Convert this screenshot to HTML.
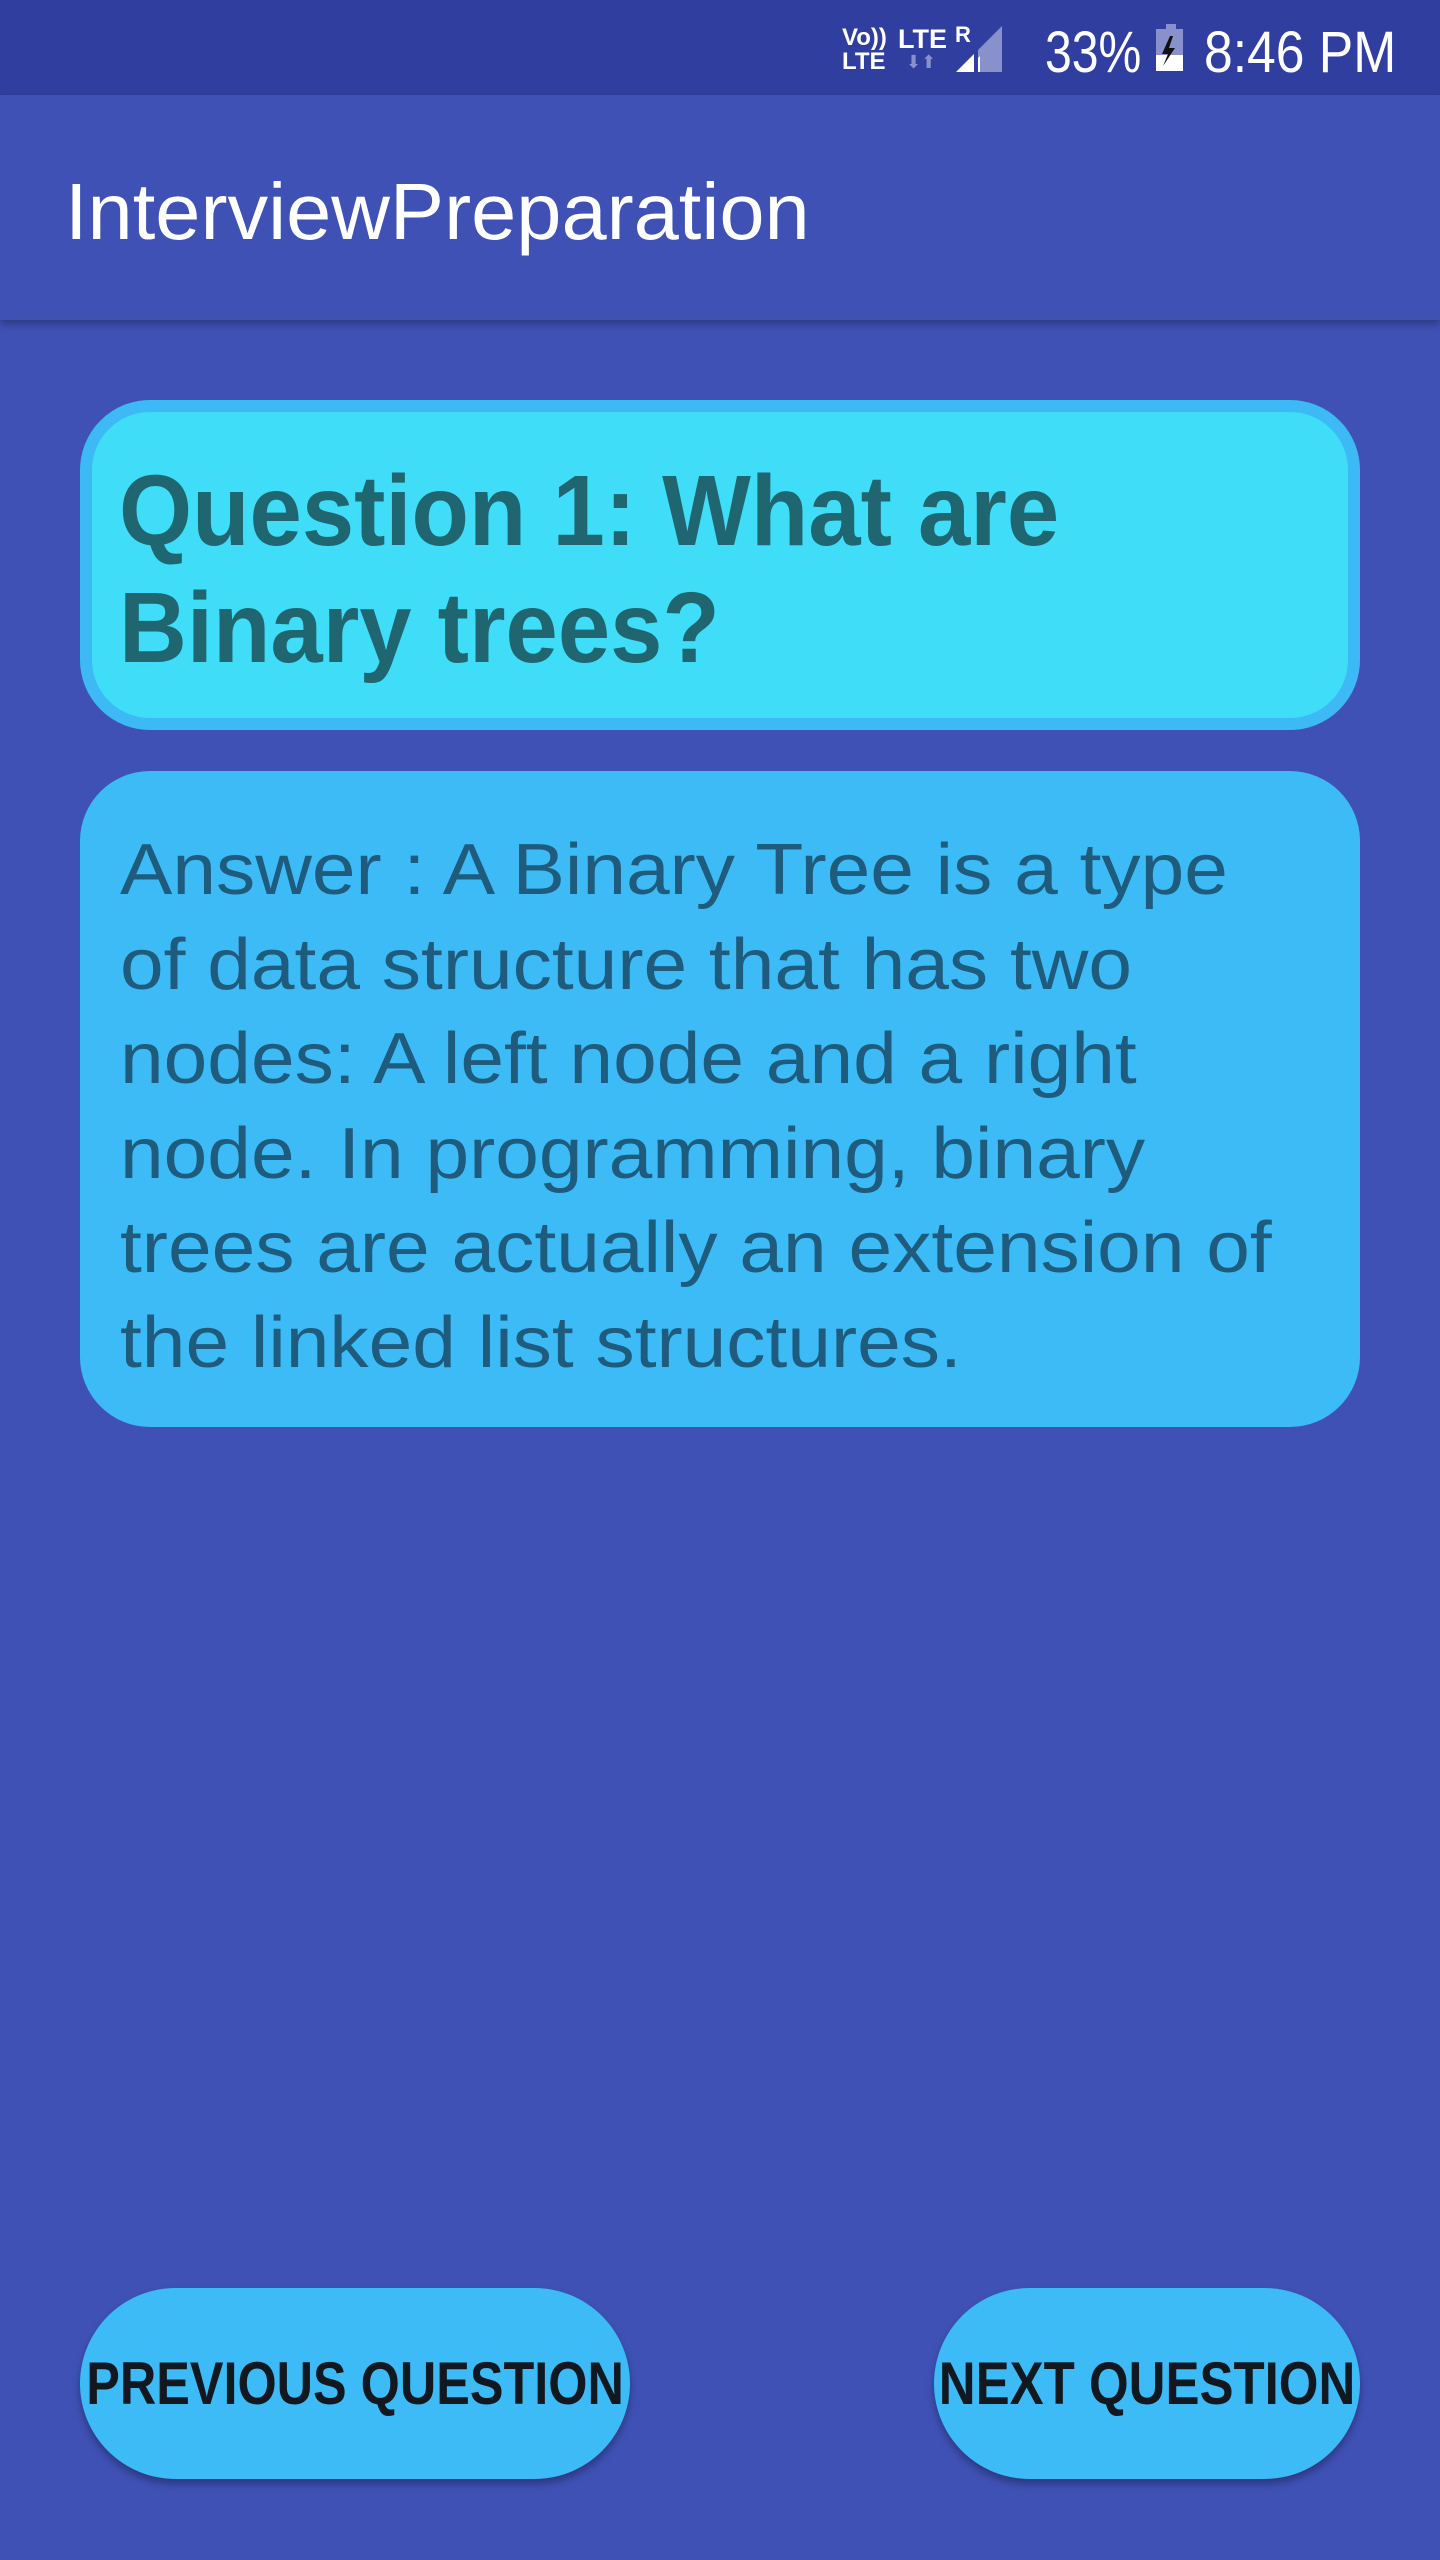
<!DOCTYPE html>
<html><head><meta charset="utf-8"><style>
*{margin:0;padding:0;box-sizing:border-box}
body{width:1440px;height:2560px;background:#3F51B5;position:relative;overflow:hidden;font-family:"Liberation Sans",sans-serif}
.sb{position:absolute;left:0;top:0;width:1440px;height:95px;background:#303F9F}
.ab{position:absolute;left:0;top:95px;width:1440px;height:225px;background:#3F51B5;box-shadow:0 4px 8px rgba(0,0,0,.3)}
.ln{position:absolute;white-space:nowrap;transform-origin:0 0}
.q{position:absolute;left:80px;top:400px;width:1280px;height:330px;background:#3FDDF8;border:12px solid #3DBAF6;border-radius:70px}
.a{position:absolute;left:80px;top:771px;width:1280px;height:656px;background:#3DBBF7;border-radius:70px}
.btn{position:absolute;top:2288px;height:191px;background:#3DBBF7;border-radius:96px;box-shadow:0 5px 8px rgba(0,0,0,.3);display:flex;align-items:center;justify-content:center;font-weight:bold;font-size:60px;color:#121820;white-space:nowrap}
</style></head><body>
<div class="sb">
 <div class="ln" style="left:842px;top:26px;font-size:24px;font-weight:bold;color:#fff;line-height:24px">Vo))<br>LTE</div>
 <div class="ln" style="left:898px;top:24px;font-size:27px;font-weight:bold;color:#fff">LTE</div>
 <div class="ln" style="left:906px;top:52px;font-size:18px;color:#8891CC">⬇⬆</div>
 <div class="ln" style="left:955px;top:22px;font-size:22px;font-weight:bold;color:#fff">R</div>
 <svg style="position:absolute;left:950px;top:22px" width="76" height="52"><polygon points="6,50 24,32 24,50" fill="#fff"/><polygon points="28,50 28,28 52,4 52,50" fill="#8891CC"/><polygon points="28,50 28,36 30,34 30,50" fill="#fff"/></svg>
 <div class="ln" style="left:1045px;top:19px;font-size:58px;color:#fff;transform:scaleX(.83)">33%</div>
 <svg style="position:absolute;left:1153px;top:22px" width="32" height="52"><rect x="13" y="2" width="10" height="6" fill="#8891CC"/><rect x="3" y="7" width="27" height="26" fill="#8891CC"/><rect x="3" y="33" width="27" height="16" fill="#fff"/><polygon points="17,14 9,32 15,32 10,44 22,26 16,26 20,14" fill="#111"/></svg>
 <div class="ln" style="left:1204px;top:19px;font-size:58px;color:#fff;transform:scaleX(.89)">8:46 PM</div>
</div>
<div class="ab"></div>
<div class="ln" style="left:65px;top:172px;font-size:80px;line-height:80px;color:#fff;transform:scaleX(1.015)">InterviewPreparation</div>
<div class="q"></div>
<div class="ln" style="left:119px;top:453px;font-size:100px;line-height:117px;font-weight:bold;color:#1F6670;transform:scaleX(.94)">Question 1: What are<br>Binary trees?</div>
<div class="a"></div>
<div class="ln" style="left:120px;top:823px;font-size:72px;line-height:94.5px;color:#1E5B7C;transform:scaleX(1.09)">Answer : A Binary Tree is a type<br>of data structure that has two<br>nodes: A left node and a right<br>node. In programming, binary<br>trees are actually an extension of<br>the linked list structures.</div>
<div class="btn" style="left:80px;width:550px"><span style="display:inline-block;transform:scaleX(.84)">PREVIOUS QUESTION</span></div>
<div class="btn" style="left:934px;width:426px"><span style="display:inline-block;transform:scaleX(.85)">NEXT QUESTION</span></div>
</body></html>
